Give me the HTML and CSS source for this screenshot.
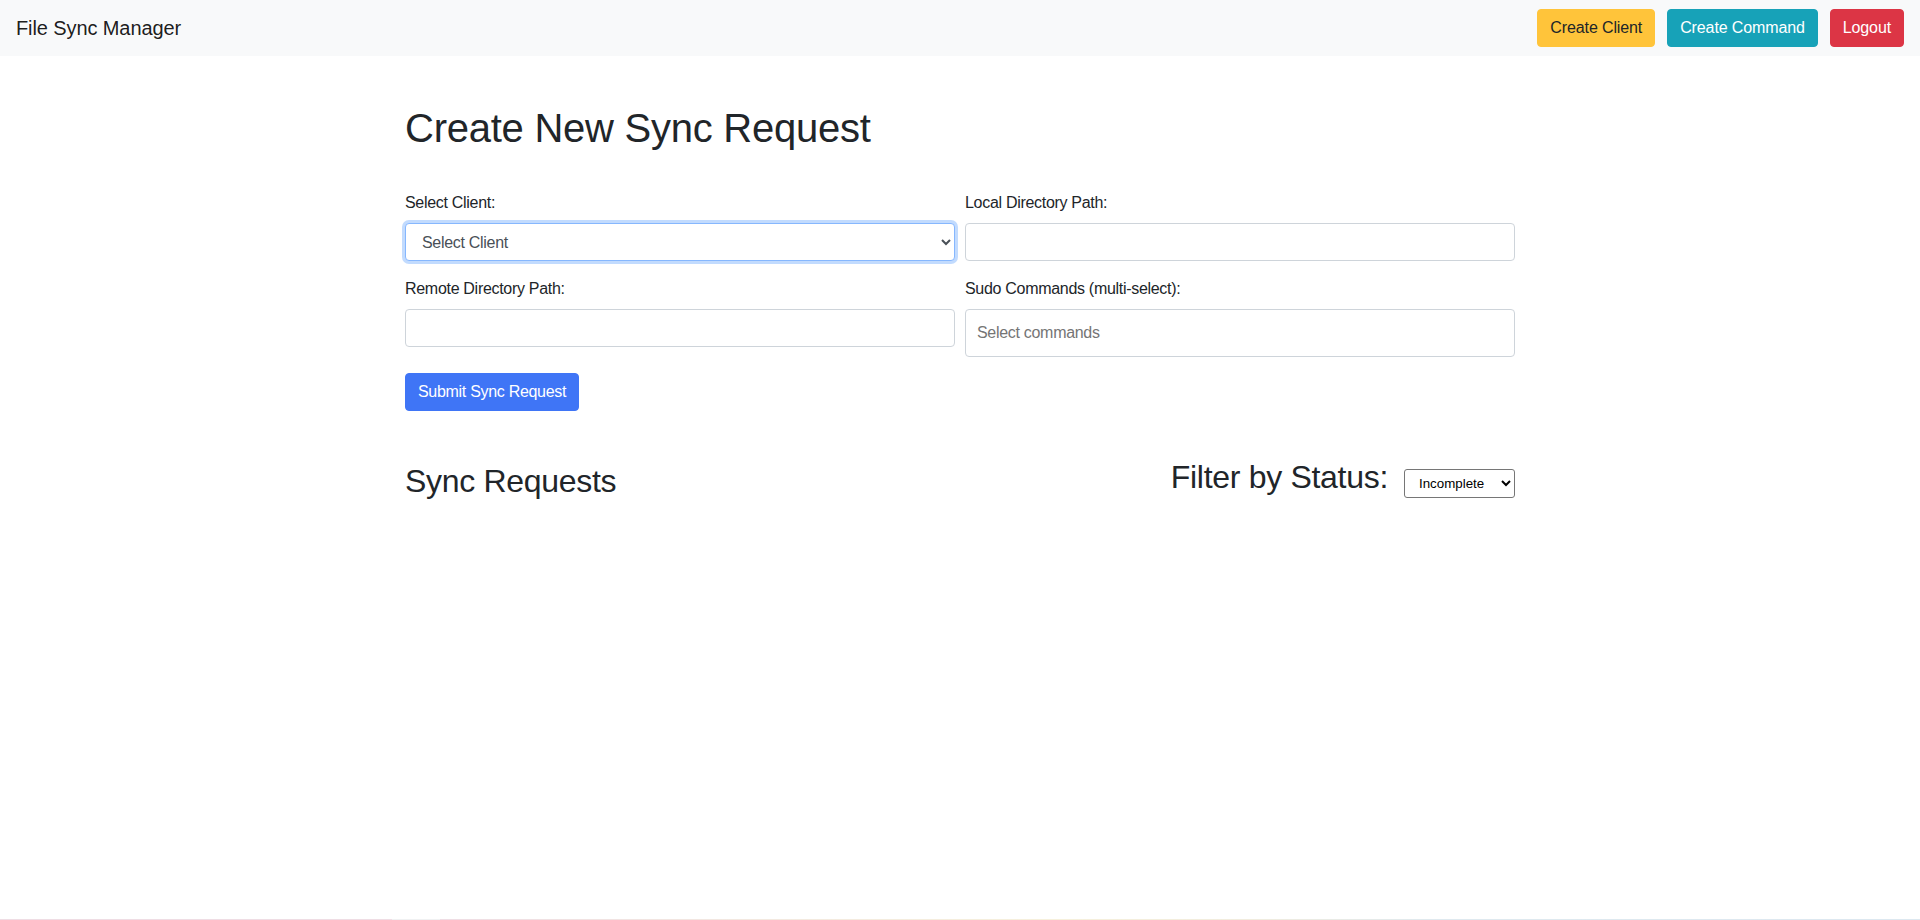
FILE: index.html
```html
<!DOCTYPE html>
<html lang="en">
<head>
<meta charset="utf-8">
<title>File Sync Manager</title>
<link rel="stylesheet" href="styles.css">
</head>
<body>
<nav class="navbar">
  <span class="brand">File Sync Manager</span>
  <div class="nav-actions">
    <button class="btn nav-btn btn-warning">Create Client</button>
    <button class="btn nav-btn btn-info">Create Command</button>
    <button class="btn nav-btn btn-danger">Logout</button>
  </div>
</nav>
<main class="container">
  <h1 class="page-title">Create New Sync Request</h1>
  <form class="sync-form">
    <div class="form-grid">
      <div class="form-group">
        <label class="field-label">Select Client:</label>
        <select class="form-control is-focused"><option>Select Client</option></select>
      </div>
      <div class="form-group">
        <label class="field-label">Local Directory Path:</label>
        <input class="form-control" type="text">
      </div>
      <div class="form-group">
        <label class="field-label">Remote Directory Path:</label>
        <input class="form-control" type="text">
      </div>
      <div class="form-group">
        <label class="field-label">Sudo Commands (multi-select):</label>
        <div class="multi-select"><span class="multi-placeholder">Select commands</span></div>
      </div>
    </div>
    <button type="button" class="btn btn-primary">Submit Sync Request</button>
  </form>
  <div class="list-header">
    <h2 class="section-title">Sync Requests</h2>
    <div class="filter">
      <h2 class="filter-title">Filter by Status:</h2>
      <select class="status-select"><option>Incomplete</option></select>
    </div>
  </div>
</main>
<div class="bottom-line"></div>
</body>
</html>
```

FILE: styles.css
```css
* { box-sizing: border-box; }

html, body { margin: 0; padding: 0; }

body {
  font-family: "Liberation Sans", Arial, sans-serif;
  font-size: 16px;
  line-height: 1.5;
  letter-spacing: -0.3px;
  color: #212529;
  background: #fff;
  min-height: 100vh;
  display: flex;
  flex-direction: column;
}

.navbar {
  background: #f8f9fa;
  height: 56px;
  padding: 8px 16px;
  display: flex;
  align-items: center;
  justify-content: space-between;
}

.brand {
  font-size: 20px;
  line-height: 30px;
  letter-spacing: -0.1px;
  color: rgba(0, 0, 0, 0.9);
}

.nav-actions {
  display: flex;
  gap: 12px;
}

.btn {
  font-family: inherit;
  font-size: 16px;
  line-height: 24px;
  letter-spacing: -0.3px;
  padding: 6px 12px;
  border: 1px solid transparent;
  border-radius: 4px;
  cursor: pointer;
}

.nav-btn {
  letter-spacing: -0.12px;
}

.btn-warning { background: #ffc43a; border-color: #ffc43a; color: #212529; }
.btn-info { background: #17a2b8; border-color: #17a2b8; color: #fff; }
.btn-danger { background: #dc3545; border-color: #dc3545; color: #fff; }
.btn-primary { background: #3f75f6; border-color: #3f75f6; color: #fff; }

.container {
  width: 1110px;
  margin: 48px auto 0;
}

.page-title {
  font-size: 40px;
  font-weight: 400;
  line-height: 1.2;
  letter-spacing: -0.25px;
  margin: 0 0 39px;
}

.form-grid {
  display: grid;
  grid-template-columns: 1fr 1fr;
  column-gap: 10px;
  align-items: start;
}

.form-group {
  margin-bottom: 16px;
}

.field-label {
  display: block;
  margin-bottom: 8px;
}

.form-control {
  display: block;
  width: 100%;
  height: 38px;
  padding: 6px 12px;
  font-family: inherit;
  font-size: 16px;
  line-height: 1.5;
  letter-spacing: -0.3px;
  color: #495057;
  background: #fff;
  border: 1px solid #ced4da;
  border-radius: 4px;
  outline: none;
}

.is-focused {
  border-color: #86b7fe;
  box-shadow: 0 0 0 3px rgba(13, 110, 253, 0.25);
}

.multi-select {
  height: 48px;
  border: 1px solid #ced4da;
  border-radius: 4px;
  padding: 0 11px;
  display: flex;
  align-items: center;
  background: #fff;
}

.multi-placeholder {
  color: #757575;
  font-size: 16px;
}

.list-header {
  margin-top: 47px;
  display: flex;
  justify-content: space-between;
  align-items: flex-start;
}

.section-title {
  font-size: 32px;
  font-weight: 400;
  line-height: 1.2;
  margin: 4px 0 0;
}

.filter {
  display: flex;
  align-items: flex-start;
  gap: 16px;
}

.filter-title {
  font-size: 32px;
  font-weight: 400;
  line-height: 1.2;
  margin: 0;
}

.status-select {
  margin-top: 11px;
  width: 111px;
  height: 29px;
  padding: 0 6px 0 10px;
  font-family: "Liberation Sans", Arial, sans-serif;
  font-size: 13.33px;
  letter-spacing: 0;
  color: #000;
  background: #fff;
  border: 1px solid #767676;
  border-radius: 3px;
}

.bottom-line {
  margin-top: auto;
  height: 1px;
  background: linear-gradient(90deg, #efdde4 0%, #efdde4 20.4%, #f0f1f2 20.4%, #f0f1f2 22.9%, #efdde4 22.9%, #f3e9e0 40%, #f6f0dc 55%, #f1ecde 65%, #dfe9ef 75%, #dde8f0 100%);
}
```
